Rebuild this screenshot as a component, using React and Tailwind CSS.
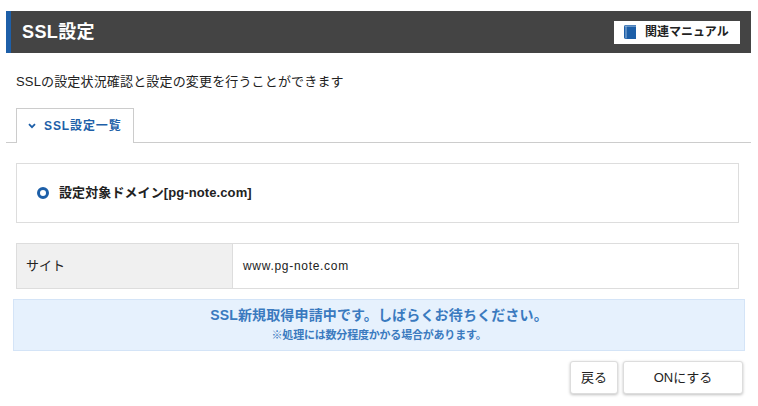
const font = 'font-["Liberation_Sans","Noto_Sans_CJK_JP",sans-serif]'

const BookIcon = () => (
    <svg width="12" height="14" viewBox="0 0 12 14" className="shrink-0">
        <path d="M1.7 0H12V14H1.7C0.7 14 0 13.3 0 12.3V1.7C0 0.7 0.7 0 1.7 0Z" fill="#1d5fa8" />
        <path d="M0.8 1.1H12M2 1.1V13.4" stroke="#a9c4e2" strokeWidth="0.9" fill="none" />
    </svg>
)

const Chevron = () => (
    <svg width="8" height="6" viewBox="0 0 8 6" className="shrink-0">
        <path d="M1 1.2L4 4.2L7 1.2" stroke="#1d5fa8" strokeWidth="1.8" fill="none" />
    </svg>
)

const App = () => {
    return (
        <div className={`${font} w-[758px] h-[406px] bg-white text-[#222] overflow-hidden pt-[11px] relative`}>
            {/* Header */}
            <div className="ml-[6px] w-[745px] h-[42px] bg-[#444] border-l-[5px] border-[#1d5fa8] flex items-center justify-between pl-[11px] pr-[11px]">
                <h1 className="text-[18px] font-bold text-white tracking-[0.4px]">SSL設定</h1>
                <a className="w-[126px] h-[23px] bg-white flex items-center pl-[10px] gap-[9px] text-[12px] font-bold text-[#222]">
                    <BookIcon />
                    関連マニュアル
                </a>
            </div>

            <p className="ml-[16px] mt-[21px] text-[13px] leading-[16px] tracking-[0.16px]">SSLの設定状況確認と設定の変更を行うことができます</p>

            {/* Tab */}
            <div className="ml-[6px] w-[745px] mt-[18px] h-[35px] border-b border-[#ccc] pl-[10px]">
                <div className="w-[118px] h-[35px] bg-white border border-b-0 border-[#ccc] flex items-center pl-[11px] gap-[8px] text-[12px] font-bold text-[#1d5fa8] tracking-[0.9px]">
                    <Chevron />
                    SSL設定一覧
                </div>
            </div>

            {/* Domain */}
            <div className="ml-[16px] w-[723px] h-[60px] mt-[20px] border border-[#ddd] flex items-center pl-[20px] gap-[10px]">
                <span className="w-[12px] h-[12px] rounded-full border-[3.5px] border-[#1d5fa8] bg-white shrink-0" />
                <span className="text-[13px] font-bold tracking-[0.1px]">設定対象ドメイン[pg-note.com]</span>
            </div>

            {/* Site */}
            <div className="ml-[16px] w-[723px] h-[46px] mt-[20px] border border-[#ddd] flex">
                <div className="w-[216px] bg-[#f0f0f0] border-r border-[#ddd] flex items-center pl-[9px] text-[13px]">サイト</div>
                <div className="flex-1 flex items-center pl-[10px] text-[12px] tracking-[0.7px]">www.pg-note.com</div>
            </div>

            {/* Notice */}
            <div className="ml-[13px] w-[732px] h-[52px] mt-[10px] bg-[#e6f1fd] border border-[#d4e4f7] flex flex-col items-center pt-[6px] text-[#3a7abf] font-bold">
                <p className="text-[14px] leading-[18px] tracking-[0.15px]">SSL新規取得申請中です。しばらくお待ちください。</p>
                <p className="text-[11px] leading-[14px] mt-[4px] tracking-[-0.2px]">※処理には数分程度かかる場合があります。</p>
            </div>

            {/* Buttons */}
            <div className="ml-[570px] mt-[10px] flex gap-[5px]">
                <button className="w-[48px] h-[33px] bg-white border border-[#ddd] rounded-[3px] shadow-[0_1px_3px_rgba(0,0,0,0.25)] text-[13px]">戻る</button>
                <button className="w-[120px] h-[33px] bg-white border border-[#ddd] rounded-[3px] shadow-[0_1px_3px_rgba(0,0,0,0.25)] text-[13px]">ONにする</button>
            </div>
        </div>
    )
}

export default App
